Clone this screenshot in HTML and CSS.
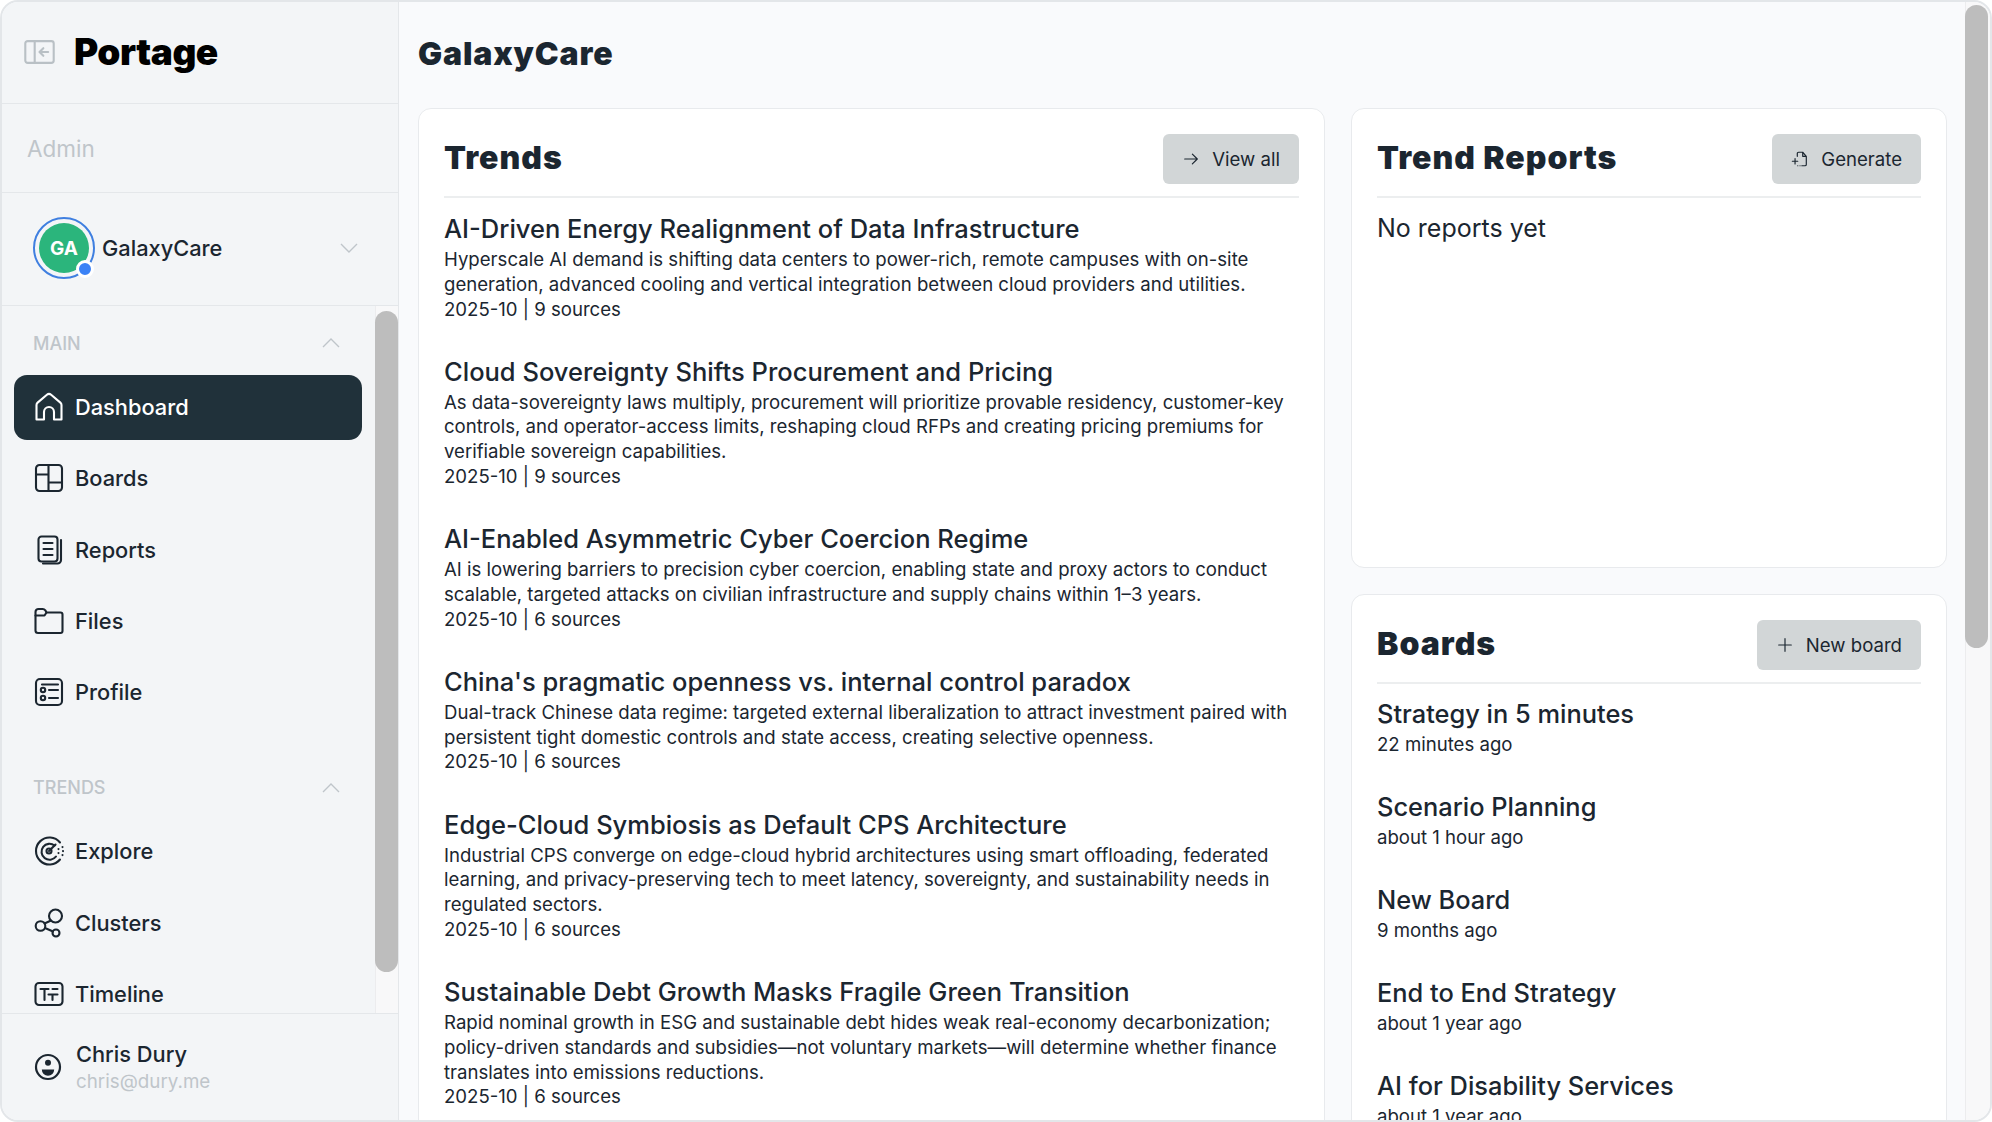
FILE: index.html
```html
<!DOCTYPE html>
<html lang="en">
  <head>
    <meta charset="UTF-8" />
    <meta name="viewport" content="width=device-width, initial-scale=1.0" />
    <title>Portage</title>
    <link rel="stylesheet" href="styles.css">
  </head>
  <body>
    <div class="app">
      <aside class="sidebar">
        <div class="brand">
          <svg class="toggle-icon" viewBox="0 0 32 25" fill="none" stroke="currentColor" stroke-width="2.2" stroke-linecap="round" stroke-linejoin="round">
            <rect x="1.2" y="1.2" width="29.6" height="22.6" rx="2.5" />
            <path d="M11 1.2v22.6" />
            <path d="M25 12.5h-8.5M20 8.5l-4 4 4 4" />
          </svg>
          <span class="logo">Portage</span>
        </div>
        <div class="admin">Admin</div>
        <div class="org">
          <div class="avatar">
            <span class="avatar-inner">GA</span>
            <span class="avatar-dot"></span>
          </div>
          <span class="org-name">GalaxyCare</span>
          <svg class="chevron org-chevron" viewBox="0 0 18 10"><path d="M1 1l8 8 8-8" /></svg>
        </div>

        <div class="nav-wrap">
          <nav class="nav">
            <div class="nav-head">
              <span>MAIN</span>
              <svg class="chevron" viewBox="0 0 18 10"><path d="M1 9l8-8 8 8" /></svg>
            </div>
            <a class="nav-item active">
              <svg class="nav-icon" viewBox="0 0 30 30"><path d="M2.5 27.5V13c0-1 .4-1.8 1.1-2.4l9.3-7.8c1.2-1 3-1 4.2 0l9.3 7.8c.7.6 1.1 1.4 1.1 2.4v14.5H20v-7.5a5 5 0 0 0-10 0v7.5z" /></svg>
              Dashboard
            </a>
            <a class="nav-item">
              <svg class="nav-icon" viewBox="0 0 30 30"><rect x="2" y="2" width="26" height="26" rx="3.5" /><path d="M2 11.5h12.5M14.5 2v26M14.5 19.5H28" /></svg>
              Boards
            </a>
            <a class="nav-item">
              <svg class="nav-icon" viewBox="0 0 30 30"><rect x="4.5" y="1.5" width="19" height="25" rx="3" /><path d="M9.5 8h9M9.5 14h9M9.5 20h9" /><path d="M27 5v20a3.5 3.5 0 0 1-3.5 3.5H9" /></svg>
              Reports
            </a>
            <a class="nav-item">
              <svg class="nav-icon" viewBox="0 0 30 30"><path d="M1.5 6c0-1.7 1.3-3 3-3h4.2c1 0 2 .5 2.6 1.3l1.2 2.2h14c1.2 0 2 .9 2 2V25c0 1.2-.8 2-2 2H4c-1.5 0-2.500-1-2.500-2.500z" /><path d="M1.5 9.5h9l2-3" /></svg>
              Files
            </a>
            <a class="nav-item">
              <svg class="nav-icon" viewBox="0 0 30 30"><rect x="2" y="2" width="26" height="26" rx="4" /><circle cx="9" cy="13" r="2.2" /><circle cx="9" cy="21" r="2.2" /><path d="M8 7.5h16M15 13h9M15 21h9" /></svg>
              Profile
            </a>

            <div class="nav-head trends-head">
              <span>TRENDS</span>
              <svg class="chevron" viewBox="0 0 18 10"><path d="M1 9l8-8 8 8" /></svg>
            </div>
            <a class="nav-item">
              <svg class="nav-icon" viewBox="0 0 30 30"><path d="M26 6.5a13.5 13.5 0 1 0 0 17" /><path d="M20.5 9.5a8 8 0 1 0 1.5 11" /><path d="M15 15l6.5-6.5" /><circle cx="15" cy="15" r="2.5" /><path d="M28.5 11v.1M29 15v.1M28.5 19v.1M24.5 13v.1M24.5 17v.1" /></svg>
              Explore
            </a>
            <a class="nav-item">
              <svg class="nav-icon" viewBox="0 0 30 30"><circle cx="21.5" cy="8" r="6.5" /><circle cx="6.5" cy="18" r="4.8" /><circle cx="22" cy="25" r="3.5" /><path d="M17 12.5l-6.500 3M11 20l8 3.500" /></svg>
              Clusters
            </a>
            <a class="nav-item">
              <svg class="nav-icon" viewBox="0 0 30 30"><rect x="1.5" y="4" width="27" height="22" rx="3.5" /><path d="M6.500 10h8M10.500 10v11M14.500 15.500h9M18.500 15.500v5.500M18.500 10h5" /></svg>
              Timeline
            </a>
          </nav>
          <div class="scrollbar"><div class="scroll-thumb nav-thumb"></div></div>
        </div>

        <div class="user">
          <svg class="user-icon" viewBox="0 0 28 28"><circle cx="14" cy="14" r="12" fill="none" stroke="currentColor" stroke-width="2.2" /><circle cx="14" cy="9.8" r="3" fill="currentColor" /><path d="M7.8 16.5h12.4a6.2 6.2 0 0 1-12.4 0z" fill="currentColor" /></svg>
          <div>
            <div class="user-name">Chris Dury</div>
            <div class="user-mail">chris@dury.me</div>
          </div>
        </div>
      </aside>

      <main class="main">
        <h1 class="page-title">GalaxyCare</h1>
        <div class="columns">
          <section class="card">
            <div class="card-head">
              <h2>Trends</h2>
              <button class="btn">
                <svg class="btn-icon" viewBox="0 0 20 20"><path d="M3 10h14M11.5 4.5L17 10l-5.5 5.5" /></svg>
                View all
              </button>
            </div>
            <div class="trend">
              <h3>AI-Driven Energy Realignment of Data Infrastructure</h3>
              <p>Hyperscale AI demand is shifting data centers to power-rich, remote campuses with on-site generation, advanced cooling and vertical integration between cloud providers and utilities.</p>
              <p>2025-10 | 9 sources</p>
            </div>
            <div class="trend">
              <h3>Cloud Sovereignty Shifts Procurement and Pricing</h3>
              <p>As data-sovereignty laws multiply, procurement will prioritize provable residency, customer-key controls, and operator-access limits, reshaping cloud RFPs and creating pricing premiums for verifiable sovereign capabilities.</p>
              <p>2025-10 | 9 sources</p>
            </div>
            <div class="trend">
              <h3>AI-Enabled Asymmetric Cyber Coercion Regime</h3>
              <p>AI is lowering barriers to precision cyber coercion, enabling state and proxy actors to conduct scalable, targeted attacks on civilian infrastructure and supply chains within 1–3 years.</p>
              <p>2025-10 | 6 sources</p>
            </div>
            <div class="trend">
              <h3>China's pragmatic openness vs. internal control paradox</h3>
              <p>Dual-track Chinese data regime: targeted external liberalization to attract investment paired with persistent tight domestic controls and state access, creating selective openness.</p>
              <p>2025-10 | 6 sources</p>
            </div>
            <div class="trend">
              <h3>Edge-Cloud Symbiosis as Default CPS Architecture</h3>
              <p>Industrial CPS converge on edge-cloud hybrid architectures using smart offloading, federated learning, and privacy-preserving tech to meet latency, sovereignty, and sustainability needs in regulated sectors.</p>
              <p>2025-10 | 6 sources</p>
            </div>
            <div class="trend">
              <h3>Sustainable Debt Growth Masks Fragile Green Transition</h3>
              <p>Rapid nominal growth in ESG and sustainable debt hides weak real-economy decarbonization; policy-driven standards and subsidies—not voluntary markets—will determine whether finance translates into emissions reductions.</p>
              <p>2025-10 | 6 sources</p>
            </div>
          </section>

          <div class="side-column">
            <section class="card reports-card">
              <div class="card-head">
                <h2>Trend Reports</h2>
                <button class="btn">
                  <svg class="btn-icon" viewBox="0 0 20 20"><path d="M7 7V4c0-.8.5-1.5 1.5-1.5H13l4 4.500v9c0 1-.7 1.500-1.500 1.500H12M13 2.500V7h4" /><path d="M4.500 9.500v6M1.500 12.500h6M10 17.500h.1M7.500 17.500h.1" /></svg>
                  Generate
                </button>
              </div>
              <div class="empty">No reports yet</div>
            </section>

            <section class="card">
              <div class="card-head">
                <h2>Boards</h2>
                <button class="btn">
                  <svg class="btn-icon" viewBox="0 0 20 20"><path d="M10 3v14M3 10h14" /></svg>
                  New board
                </button>
              </div>
              <div class="board"><h3>Strategy in 5 minutes</h3><p>22 minutes ago</p></div>
              <div class="board"><h3>Scenario Planning</h3><p>about 1 hour ago</p></div>
              <div class="board"><h3>New Board</h3><p>9 months ago</p></div>
              <div class="board"><h3>End to End Strategy</h3><p>about 1 year ago</p></div>
              <div class="board"><h3>AI for Disability Services</h3><p>about 1 year ago</p></div>
            </section>
          </div>
        </div>
      </main>
      <div class="scrollbar main-bar"><div class="scroll-thumb main-thumb"></div></div>
    </div>
  </body>
</html>
```

FILE: styles.css
```css
* {
  box-sizing: border-box;
}

html,
body {
  height: 100%;
  margin: 0;
  overflow: hidden;
}

body {
  font-family: Inter, "Liberation Sans", sans-serif;
  color: #1b2630;
  background-color: #fff;
}

.app {
  display: flex;
  height: 1122px;
  border: 2px solid #e3e6e9;
  border-radius: 18px;
  overflow: hidden;
  background-color: #f9fafc;
}

/* sidebar */
.sidebar {
  display: flex;
  flex-direction: column;
  flex: 0 0 397px;
  height: 100%;
  background-color: #f3f5f7;
  border-right: 1px solid #e4e7ea;
}

.brand {
  display: flex;
  align-items: center;
  flex: 0 0 102px;
  padding: 0 0 2px 22px;
  border-bottom: 1px solid #e4e7ea;
}

.toggle-icon {
  width: 31px;
  height: 24px;
  color: #b9c0c5;
}

.logo {
  margin-left: 19px;
  font-size: 37px;
  font-weight: 900;
  color: #000;
  letter-spacing: -0.5px;
}

.admin {
  display: flex;
  align-items: center;
  flex: 0 0 89px;
  padding-left: 25px;
  font-size: 22.5px;
  color: #bfc5ca;
  border-bottom: 1px solid #e4e7ea;
}

.org {
  display: flex;
  align-items: center;
  flex: 0 0 113px;
  padding: 0 40px 2px 31px;
  border-bottom: 1px solid #e4e7ea;
}

.avatar {
  position: relative;
  flex: 0 0 62px;
  height: 62px;
  padding: 4px;
  border: 2.5px solid #3f7fe0;
  border-radius: 50%;
}

.avatar-inner {
  display: flex;
  align-items: center;
  justify-content: center;
  height: 100%;
  border-radius: 50%;
  background-color: #2bb57c;
  color: #fff;
  font-size: 19px;
  font-weight: 700;
}

.avatar-dot {
  position: absolute;
  right: -1px;
  bottom: -1px;
  width: 18px;
  height: 18px;
  border: 3px solid #fff;
  border-radius: 50%;
  background-color: #3b82f6;
}

.org-name {
  flex: 1;
  margin-left: 7px;
  font-size: 21.8px;
  font-weight: 500;
}

.chevron {
  width: 18px;
  height: 10px;
  fill: none;
  stroke: #bfc5ca;
  stroke-width: 1.4;
}

.nav-wrap {
  display: flex;
  flex: 1;
  min-height: 0;
}

.nav {
  flex: 1;
  min-width: 0;
  padding: 25px 13px 0 12px;
  overflow: hidden;
}

.scrollbar {
  flex: 0 0 23px;
  background-color: #f8f8f9;
  border-left: 1px solid #ececee;
}

.main-bar {
  flex-basis: 25px;
}

.scroll-thumb {
  width: 23px;
  margin-left: -1px;
  background-color: #bdbdbd;
  border-radius: 12px;
}

.nav-thumb {
  height: 661px;
  margin-top: 5px;
}

.main-thumb {
  height: 643px;
  margin-top: 3px;
}

.nav-head {
  display: flex;
  align-items: center;
  justify-content: space-between;
  height: 24px;
  margin-bottom: 20px;
  padding: 0 22px 0 19px;
  font-size: 18px;
  font-weight: 500;
  color: #bfc5ca;
}

.trends-head {
  margin-top: 50px;
}

.nav-item {
  display: flex;
  align-items: center;
  gap: 11px;
  height: 65px;
  margin-bottom: 6.4px;
  padding: 0 0 1.5px 20px;
  border-radius: 13px;
  font-size: 21.8px;
  font-weight: 500;
}

.nav-item.active {
  background-color: #20313a;
  color: #fff;
}

.nav-icon {
  flex: 0 0 30px;
  height: 30px;
  fill: none;
  stroke: currentColor;
  stroke-width: 2.1;
  stroke-linecap: round;
  stroke-linejoin: round;
}

.user {
  display: flex;
  align-items: center;
  flex: 0 0 107px;
  gap: 14px;
  padding: 0 0 2px 32px;
  border-top: 1px solid #e4e7ea;
}

.user-icon {
  width: 28px;
  height: 28px;
  margin-top: 2px;
}

.user-name {
  font-size: 21.8px;
  font-weight: 500;
  line-height: 30px;
}

.user-mail {
  font-size: 18.8px;
  line-height: 25px;
  color: #bfc5ca;
}

/* main area */
.main {
  flex: 1;
  min-width: 0;
  height: 100%;
  padding: 0 0 0 19px;
  overflow: hidden;
}

.page-title {
  height: 106px;
  margin: 0;
  font-size: 32px;
  font-weight: 900;
  line-height: 104px;
  letter-spacing: 0.85px;
}

.columns {
  display: grid;
  grid-template-columns: 907px 596px;
  gap: 26px;
  align-items: start;
}

.side-column {
  display: flex;
  flex-direction: column;
  gap: 26px;
}

.card {
  padding: 25px 25px 26px;
  background-color: #fff;
  border: 1px solid #e8eaed;
  border-radius: 13px;
}

.reports-card {
  height: 460px;
}

.card-head {
  display: flex;
  align-items: center;
  justify-content: space-between;
  padding-bottom: 12px;
  margin-bottom: 15px;
  border-bottom: 2px solid #eceeef;
}

.card-head h2 {
  margin: 0 0 3px;
  font-size: 32px;
  font-weight: 900;
  letter-spacing: 1px;
}

.btn {
  display: flex;
  align-items: center;
  gap: 12px;
  height: 50px;
  padding: 0 19px;
  border: none;
  border-radius: 6px;
  background-color: #d2d6d7;
  color: #1b2630;
  font-family: inherit;
  font-size: 18.6px;
}

.btn-icon {
  width: 18px;
  height: 18px;
  fill: none;
  stroke: currentColor;
  stroke-width: 1.3;
  stroke-linecap: round;
  stroke-linejoin: round;
}

.trend {
  margin-bottom: 34.3px;
}

.trend h3 {
  margin: 0 0 3px;
  font-size: 25.5px;
  font-weight: 500;
  line-height: 31px;
}

.trend p {
  margin: 0;
  font-size: 18.6px;
  line-height: 24.8px;
}

.empty {
  font-size: 25px;
  line-height: 31px;
}

.board {
  height: 93px;
}

.board h3 {
  margin: 0;
  font-size: 25.4px;
  font-weight: 500;
  line-height: 30px;
}

.board p {
  margin: 0;
  font-size: 18.6px;
  line-height: 30px;
}
```
